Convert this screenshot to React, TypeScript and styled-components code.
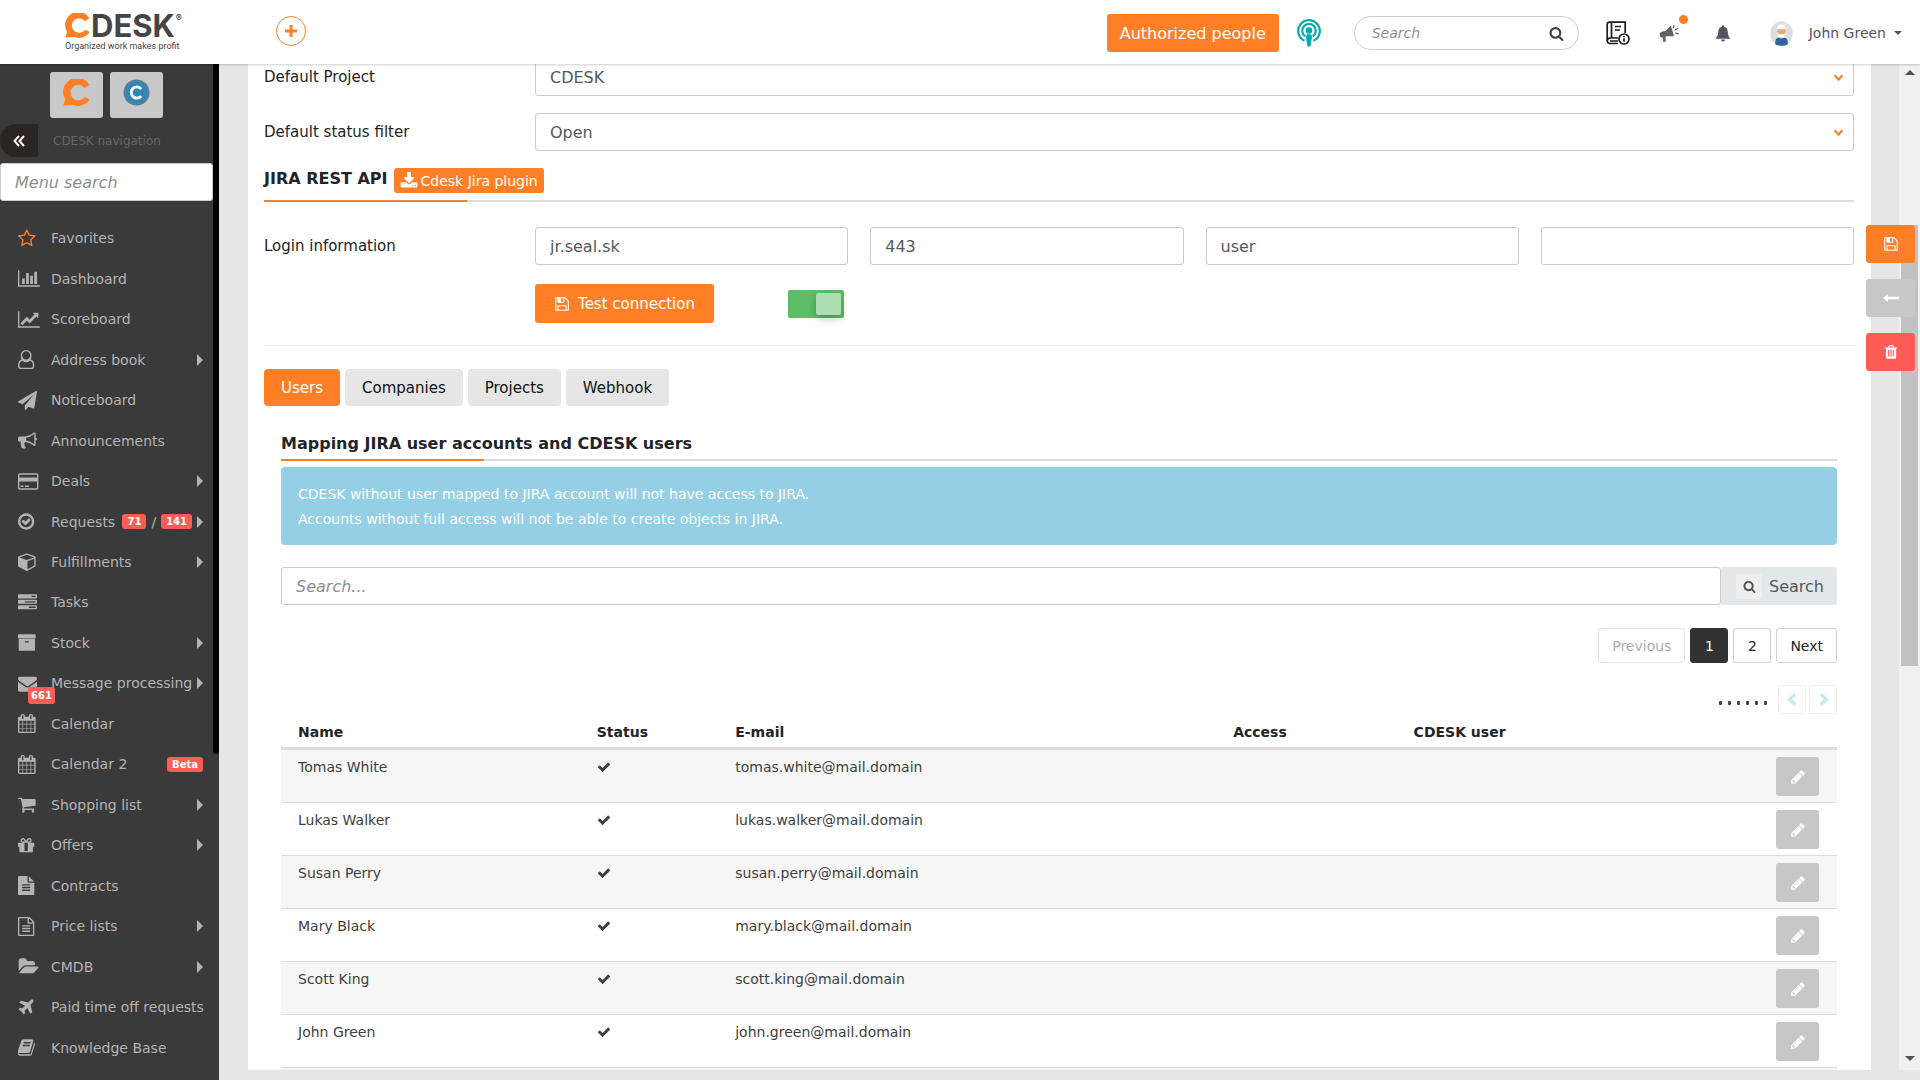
import React, { useLayoutEffect, useRef } from "react";
import styled, { createGlobalStyle, css } from "styled-components";

const c = {
  orange: "#ff7f27",
  red: "#ff5c58",
  side: "#3a3a3a",
  page: "#e6e6e6",
  line: "#dddddd",
  field: "#c9ccd0",
  text: "#212529",
  soft: "#404040",
  muted: "#c7c7c7",
};

const GlobalStyle = createGlobalStyle`
  *, *::before, *::after { box-sizing: border-box; }
  body { margin: 0; background: ${c.page}; }
  body, button, input, select {
    font-family: Verdana, "DejaVu Sans", sans-serif;
  }
  button { border: 0; cursor: pointer; }
  h2, ul, p { margin: 0; padding: 0; }
  ul { list-style: none; }
`;

/* ---------- icons ---------- */

const glyphs = {
  star: [64, "M1201 1004l306-297-422-62-189-382-189 382-422 62 306 297-73 421 378-199 377 199zm527-357q0 22-26 48l-363 354 86 500q1 7 1 20 0 50-41 50-19 0-40-12l-449-236-449 236q-22 12-40 12-21 0-31.5-14.5t-10.5-35.5q0-6 2-20l86-500-364-354q-25-27-25-48 0-37 56-46l502-73 225-455q19-41 49-41t49 41l225 455 502 73q56 9 56 46z"],
  bars: [0, "M640 896v512h-256v-512h256zm384-512v1024h-256v-1024h256zm1024 1152v128h-2048v-1536h128v1408h1920zm-640-896v768h-256v-768h256zm384-384v1152h-256v-1152h256z"],
  line: [0, "M2048 1536v128h-2048v-1536h128v1408h1920zm-128-1248v435q0 21-19.5 29.5t-35.5-7.5l-121-121-633 633q-10 10-23 10t-23-10l-233-233-416 416-192-192 585-585q10-10 23-10t23 10l233 233 464-464-121-121q-16-16-7.5-35.5t29.5-19.5h435q14 0 23 9t9 23z"],
  user: [0, "M1201 896q335 110 335 556 0 340-282 340h-972q-282 0-282-340 0-446 335-556-79-125-79-384 0-212 150-362t362-150 362 150 150 362q0 259-79 384zm-433-768q-159 0-271.500 112.500t-112.500 271.500 112.500 271.500 271.500 112.500 271.500-112.500 112.500-271.500-112.500-271.500-271.500-112.500zm486 1536q154 0 154-212 0-380-296-444-152 144-344 144t-344-144q-296 64-296 444 0 212 154 212z"],
  plane2: [0, "M1764 11q33 24 27 64l-256 1536q-5 29-32 45-14 8-31 8-11 0-24-5l-453-185-242 295q-18 23-49 23-13 0-22-4-19-7-30.5-23.5t-11.5-36.5v-349l864-1059-1069 925-395-162q-37-14-40-55-2-40 32-59l1664-960q15-9 32-9 20 0 36 11z"],
  horn: [0, "M1664 640q53 0 90.5 37.5t37.5 90.5-37.5 90.5-90.5 37.5v384q0 52-38 90t-90 38q-417-347-812-380-58 19-91 66t-31 100.5 40 92.5q-20 33-23 65.5t6 58 33.5 55 48 50 61.5 50.5q-29 58-111.5 83t-168.5 11.5-132-55.5q-7-23-29.5-87.5t-32-94.5-23-89-15-101 3.5-98.5 22-110.5h-122q-66 0-113-47t-47-113v-192q0-66 47-113t113-47h480q435 0 896-384 52 0 90 38t38 90v384zm-128 604v-954q-394 302-768 343v270q377 42 768 341z"],
  card: [0, "M1760 128q66 0 113 47t47 113v1216q0 66-47 113t-113 47h-1600q-66 0-113-47t-47-113v-1216q0-66 47-113t113-47h1600zm-1600 128q-13 0-22.5 9.5t-9.5 22.5v224h1664v-224q0-13-9.5-22.5t-22.5-9.5h-1600zm1600 1280q13 0 22.5-9.5t9.5-22.5v-608h-1664v608q0 13 9.5 22.5t22.5 9.5h1600zm-1504-128v-128h256v128h-256zm384 0v-128h384v128h-384z"],
  done: [128, "M1299 813l-422 422q-19 19-45 19t-45-19l-294-294q-19-19-19-45t19-45l102-102q19-19 45-19t45 19l147 147 275-275q19-19 45-19t45 19l102 102q19 19 19 45t-19 45zm141 83q0-148-73-273t-198-198-273-73-273 73-198 198-73 273 73 273 198 198 273 73 273-73 198-198 73-273zm224 0q0 209-103 385.5t-279.5 279.5-385.5 103-385.5-103-279.5-279.5-103-385.5 103-385.5 279.5-279.5 385.5-103 385.5 103 279.5 279.5 103 385.5z"],
  cube: [0, "M896 1629l640-349v-636l-640 233v752zm-64-865l698-254-698-254-698 254zm832-252v768q0 35-18 65t-49 47l-704 384q-28 16-61 16t-61-16l-704-384q-31-17-49-47t-18-65v-768q0-40 23-73t61-47l704-256q22-8 44-8t44 8l704 256q38 14 61 47t23 73z"],
  tasks: [0, "M1024 1408h640v-128h-640v128zm-384-512h1024v-128h-1024v128zm640-512h384v-128h-384v128zm512 832v256q0 26-19 45t-45 19h-1664q-26 0-45-19t-19-45v-256q0-26 19-45t45-19h1664q26 0 45 19t19 45zm0-512v256q0 26-19 45t-45 19h-1664q-26 0-45-19t-19-45v-256q0-26 19-45t45-19h1664q26 0 45 19t19 45zm0-512v256q0 26-19 45t-45 19h-1664q-26 0-45-19t-19-45v-256q0-26 19-45t45-19h1664q26 0 45 19t19 45z"],
  box: [64, "M1088 832q0-26-19-45t-45-19h-256q-26 0-45 19t-19 45 19 45 45 19h256q26 0 45-19t19-45zm576-192v960q0 26-19 45t-45 19h-1408q-26 0-45-19t-19-45v-960q0-26 19-45t45-19h1408q26 0 45 19t19 45zm64-448v256q0 26-19 45t-45 19h-1536q-26 0-45-19t-19-45v-256q0-26 19-45t45-19h1536q26 0 45 19t19 45z"],
  mail: [0, "M1792 710v794q0 66-47 113t-113 47h-1472q-66 0-113-47t-47-113v-794q44 49 101 87 362 246 497 345 57 42 92.5 65.5t94.5 48 110 24.5h2q51 0 110-24.5t94.5-48 92.5-65.5q170-123 498-345 57-39 100-87zm0-294q0 79-49 151t-122 123q-376 261-468 325-10 7-42.5 31t-54 38.5-52 32.5-57.5 27-50 9h-2q-23 0-50-9t-57.5-27-52-32.5-54-38.5-42.5-31q-91-64-262-182.5t-205-142.5q-62-42-117-115.5t-55-136.5q0-78 41.5-130t118.5-52h1472q65 0 112.5 47t47.5 113z"],
  calendar: [64, "M192 1664h288v-288h-288v288zm352 0h320v-288h-320v288zm-352-352h288v-320h-288v320zm352 0h320v-320h-320v320zm-352-384h288v-288h-288v288zm736 736h320v-288h-320v288zm-384-736h320v-288h-320v288zm768 736h288v-288h-288v288zm-384-352h320v-320h-320v320zm-352-864v-288q0-13-9.5-22.5t-22.5-9.5h-64q-13 0-22.5 9.5t-9.5 22.5v288q0 13 9.5 22.5t22.5 9.5h64q13 0 22.5-9.5t9.5-22.5zm736 864h288v-320h-288v320zm-384-384h320v-288h-320v288zm384 0h288v-288h-288v288zm32-480v-288q0-13-9.5-22.5t-22.5-9.5h-64q-13 0-22.5 9.5t-9.5 22.5v288q0 13 9.5 22.5t22.5 9.5h64q13 0 22.5-9.5t9.5-22.5zm384-64v1280q0 52-38 90t-90 38h-1408q-52 0-90-38t-38-90v-1280q0-52 38-90t90-38h128v-96q0-66 47-113t113-47h64q66 0 113 47t47 113v96h384v-96q0-66 47-113t113-47h64q66 0 113 47t47 113v96h128q52 0 90 38t38 90z"],
  cart: [64, "M704 1536q0 52-38 90t-90 38-90-38-38-90 38-90 90-38 90 38 38 90zm896 0q0 52-38 90t-90 38-90-38-38-90 38-90 90-38 90 38 38 90zm128-1088v512q0 24-16.5 42.5t-40.5 21.5l-1044 122q13 60 13 70 0 16-24 64h920q26 0 45 19t19 45-19 45-45 19h-1024q-26 0-45-19t-19-45q0-11 8-31.5t16-36 21.5-40 15.5-29.5l-177-823h-204q-26 0-45-19t-19-45 19-45 45-19h256q16 0 28.5 6.5t19.5 15.5 13 24.5 8 26 5.5 29.5 4.5 26h1201q26 0 45 19t19 45z"],
  gift: [128, "M1056 1356v-716h-320v716q0 25 18 38.5t46 13.5h192q28 0 46-13.5t18-38.5zm-456-844h195l-126-161q-26-31-69-31-40 0-68 28t-28 68 28 68 68 28zm688-96q0-40-28-68t-68-28q-43 0-69 31l-125 161h194q40 0 68-28t28-68zm376 256v320q0 14-9 23t-23 9h-96v416q0 40-28 68t-68 28h-1088q-40 0-68-28t-28-68v-416h-96q-14 0-23-9t-9-23v-320q0-14 9-23t23-9h440q-93 0-158.5-65.5t-65.5-158.5 65.5-158.5 158.5-65.5q107 0 168 77l128 165 128-165q61-77 168-77 93 0 158.5 65.5t65.5 158.5-65.5 158.5-158.5 65.5h440q14 0 23 9t9 23z"],
  file: [128, "M1596 476q14 14 28 36h-472v-472q22 14 36 28zm-476 164h544v1056q0 40-28 68t-68 28h-1344q-40 0-68-28t-28-68v-1600q0-40 28-68t68-28h800v544q0 40 28 68t68 28zm160 736v-64q0-14-9-23t-23-9h-704q-14 0-23 9t-9 23v64q0 14 9 23t23 9h704q14 0 23-9t9-23zm0-256v-64q0-14-9-23t-23-9h-704q-14 0-23 9t-9 23v64q0 14 9 23t23 9h704q14 0 23-9t9-23zm0-256v-64q0-14-9-23t-23-9h-704q-14 0-23 9t-9 23v64q0 14 9 23t23 9h704q14 0 23-9t9-23z"],
  fileLine: [128, "M1596 380q28 28 48 76t20 88v1152q0 40-28 68t-68 28h-1344q-40 0-68-28t-28-68v-1600q0-40 28-68t68-28h896q40 0 88 20t76 48zm-444-244v376h376q-10-29-22-41l-313-313q-12-12-41-22zm384 1528v-1024h-416q-40 0-68-28t-28-68v-416h-768v1536h1280zm-1024-864q0-14 9-23t23-9h704q14 0 23 9t9 23v64q0 14-9 23t-23 9h-704q-14 0-23-9t-9-23v-64zm736 224q14 0 23 9t9 23v64q0 14-9 23t-23 9h-704q-14 0-23-9t-9-23v-64q0-14 9-23t23-9h704zm0 256q14 0 23 9t9 23v64q0 14-9 23t-23 9h-704q-14 0-23-9t-9-23v-64q0-14 9-23t23-9h704z"],
  folder: [0, "M1943 952q0 31-31 66l-336 396q-43 51-120.5 86.5t-143.5 35.5h-1088q-34 0-60.5-13t-26.5-43q0-31 31-66l336-396q43-51 120.5-86.5t143.5-35.5h1088q34 0 60.5 13t26.5 43zm-343-344v160h-832q-94 0-197 47.5t-164 119.5l-337 396-5 6q0-4-.5-12.5t-.5-12.5v-960q0-92 66-158t158-66h320q92 0 158 66t66 158v32h544q92 0 158 66t66 158z"],
  plane: [128, "M1568 160q44 52 12 148t-108 172l-161 161 160 696q5 19-12 33l-128 96q-7 6-19 6-4 0-7-1-15-3-21-16l-279-508-259 259 53 194q5 17-8 31l-96 96q-9 9-23 9h-2q-15-2-24-13l-189-252-252-189q-11-7-13-23-1-13 9-25l96-97q9-9 23-9 6 0 8 1l194 53 259-259-508-279q-14-8-17-24-2-16 9-27l128-128q14-13 30-8l665 159 160-160q76-76 172-108t148 12z"],
  book: [64, "M1639 478q40 57 18 129l-275 906q-19 64-76.5 107.5t-122.5 43.5h-923q-77 0-148.5-53.5t-99.5-131.5q-24-67-2-127 0-4 3-27t4-37q1-8-3-21.5t-3-19.5q2-11 8-21t16.5-23.5 16.5-23.5q23-38 45-91.5t30-91.5q3-10 .5-30t-.5-28q3-11 17-28t17-23q21-36 42-92t25-90q1-9-2.5-32t.5-28q4-13 22-30.5t22-22.5q19-26 42.5-84.5t27.5-96.5q1-8-3-25.5t-2-26.5q2-8 9-18t18-23 17-21q8-12 16.5-30.5t15-35 16-36 19.5-32 26.5-23.5 36-11.5 47.5 5.5l-1 3q38-9 51-9h761q74 0 114 56t18 130l-274 906q-36 119-71.5 153.5t-128.5 34.5h-869q-27 0-38 15-11 16-1 43 24 70 144 70h923q29 0 56-15.5t35-41.5l300-987q7-22 5-57 38 15 59 43zm-1064 2q-4 13 2 22.5t20 9.5h608q13 0 25.5-9.5t16.5-22.5l21-64q4-13-2-22.5t-20-9.5h-608q-13 0-25.5 9.5t-16.5 22.5zm-83 256q-4 13 2 22.5t20 9.5h608q13 0 25.5-9.5t16.5-22.5l21-64q4-13-2-22.5t-20-9.5h-608q-13 0-25.5 9.5t-16.5 22.5z"],
  pencil: [0, "M491 1536l91-91-235-235-91 91v107h128v128h107zm523-928q0-22-22-22-10 0-17 7l-542 542q-7 7-7 17 0 22 22 22 10 0 17-7l542-542q7-7 7-17zm-54-192l416 416-832 832h-416v-416zm683 96q0 53-37 90l-166 166-416-416 166-165q36-38 90-38 53 0 91 38l235 234q37 39 37 91z"],
  trash: [0, "M704 1376v-704q0-14-9-23t-23-9h-64q-14 0-23 9t-9 23v704q0 14 9 23t23 9h64q14 0 23-9t9-23zm256 0v-704q0-14-9-23t-23-9h-64q-14 0-23 9t-9 23v704q0 14 9 23t23 9h64q14 0 23-9t9-23zm256 0v-704q0-14-9-23t-23-9h-64q-14 0-23 9t-9 23v704q0 14 9 23t23 9h64q14 0 23-9t9-23zm-544-992h448l-48-117q-7-9-17-11h-317q-10 2-17 11zm928 32v64q0 14-9 23t-23 9h-96v948q0 83-47 143.5t-113 60.5h-832q-66 0-113-58.5t-47-141.5v-952h-96q-14 0-23-9t-9-23v-64q0-14 9-23t23-9h309l70-167q15-37 54-63t79-26h320q40 0 79 26t54 63l70 167h309q14 0 23 9t9 23z"],
  save: [0, "M512 1536h768v-384h-768v384zm896 0h128v-896q0-14-10-38.5t-20-34.5l-281-281q-10-10-34-20t-39-10v416q0 40-28 68t-68 28h-576q-40 0-68-28t-28-68v-416h-128v1280h128v-416q0-40 28-68t68-28h832q40 0 68 28t28 68v416zm-384-928v-320q0-13-9.5-22.5t-22.5-9.5h-192q-13 0-22.5 9.5t-9.5 22.5v320q0 13 9.5 22.5t22.5 9.5h192q13 0 22.5-9.5t9.5-22.5zm640 32v928q0 40-28 68t-68 28h-1344q-40 0-68-28t-28-68v-1344q0-40 28-68t68-28h928q40 0 88 20t76 48l280 280q28 28 48 76t20 88z"],
  check: [0, "M1671 566q0 40-28 68l-724 724-136 136q-28 28-68 28t-68-28l-136-136-362-362q-28-28-28-68t28-68l136-136q28-28 68-28t68 28l294 295 656-657q28-28 68-28t68 28l136 136q28 28 28 68z"],
  search: [0, "M1216 832q0-185-131.5-316.5t-316.5-131.5-316.5 131.500-131.500 316.500 131.500 316.500 316.500 131.500 316.500-131.500 131.500-316.500zm512 832q0 52-38 90t-90 38q-54 0-90-38l-343-342q-179 124-399 124-143 0-273.500-55.500t-225-150-150-225-55.500-273.500 55.500-273.500 150-225 225-150 273.500-55.500 273.500 55.500 225 150 150 225 55.500 273.500q0 220-124 399l343 343q37 37 37 90z"],
  download: [0, "M1344 1344q0-26-19-45t-45-19-45 19-19 45 19 45 45 19 45-19 19-45zm256 0q0-26-19-45t-45-19-45 19-19 45 19 45 45 19 45-19 19-45zm128-224v320q0 40-28 68t-68 28h-1472q-40 0-68-28t-28-68v-320q0-40 28-68t68-28h465l135 136q58 56 136 56t136-56l136-136h464q40 0 68 28t28 68zm-325-569q17 41-14 70l-448 448q-18 19-45 19t-45-19l-448-448q-31-29-14-70 17-39 59-39h256v-448q0-26 19-45t45-19h256q26 0 45 19t19 45v448h256q42 0 59 39z"],
} as const;

type GlyphName = keyof typeof glyphs;

const Svg = styled.svg`
  display: block;
  flex: none;
`;

/** Solid 1792-unit glyph; nav glyphs get a 2048-unit box so that they line up on the left. */
function Glyph({ name, size, wide }: { name: GlyphName; size: number; wide?: boolean }) {
  const [x, d] = glyphs[name];
  return (
    <Svg
      width={wide ? size + 3 : size}
      height={size}
      viewBox={wide ? `${x} 0 2048 1792` : "0 0 1792 1792"}
      preserveAspectRatio="xMinYMid meet"
      fill="currentColor"
      aria-hidden
    >
      <path d={d} />
    </Svg>
  );
}

function LogoMark({ size }: { size: number }) {
  return (
    <Svg width={size} height={size} viewBox="0 0 26 26" aria-hidden>
      <path
        d="M25.500 5.500L20.700 8.600A7.500 7.500 0 1 0 20.900 17.300L25.700 19.800A13 13 0 0 1 9.800 25L.4 25.600L2 19.400A13 13 0 1 1 25.500 5.500Z"
        fill={c.orange}
      />
    </Svg>
  );
}

function RoundMark() {
  return (
    <Svg width="27" height="27" viewBox="0 0 27 27" aria-hidden>
      <circle cx="13.500" cy="13.500" r="13" fill="#547d9c" />
      <circle cx="13.500" cy="13.500" r="10.500" fill="#2f86ae" />
      <path d="M18.200 10A5.600 5.600 0 1 0 18.200 17" fill="none" stroke="#fff" strokeWidth="2.800" />
    </Svg>
  );
}

function PodcastIcon() {
  return (
    <Svg width="24" height="28" viewBox="0 0 24 28" fill="none" stroke="#00aab0" strokeWidth="2.200" aria-hidden>
      <path d="M7.500 21.700A10.800 10.800 0 1 1 16.500 21.700" />
      <path d="M8.300 17.400A6.800 6.800 0 1 1 15.700 17.400" />
      <circle cx="12" cy="11.500" r="3.300" fill="#00aab0" stroke="none" />
      <path d="M9 18a3 3 0 0 1 6 0l-1.200 8a1.800 1.800 0 0 1-3.600 0z" fill="#00aab0" stroke="none" />
    </Svg>
  );
}

function ManualIcon() {
  return (
    <Svg width="24" height="24" viewBox="0 0 24 24" fill="none" stroke="#1c1c1c" strokeWidth="1.700" aria-hidden>
      <path d="M12 22.500H4A2.800 2.800 0 0 1 1.200 19.700V3.500A2.300 2.300 0 0 1 3.500 1.200H19.200V12" />
      <path d="M5.500 1.200V17M12 17H4a2.700 2.700 0 0 0-2.700 2.500M4 20H12M9 5.500h6M9 9h5" />
      <circle cx="18" cy="18" r="5" fill="#fff" />
      <path d="M18 17.200v3.600M18 14.900v1.300" />
    </Svg>
  );
}

function MegaphoneIcon() {
  return (
    <Svg width="21" height="19" viewBox="0 0 21 19" fill="#626262" aria-hidden>
      <path d="M.6 9.200L3.200 7.600L6.500 7L11 2.200L12 2L15 11.800L14.200 12.200L7.600 12.300L6.500 12.800L6.800 17.800H4.300L3.500 13.300L1.500 13.500Z" />
      <path d="M14 4.200L15.200 1.200M15.600 6.300L18.800 4.200M16.200 9L19.600 9.800" stroke="#626262" strokeWidth="1.300" />
    </Svg>
  );
}

function BellIcon() {
  return (
    <Svg width="16" height="17" viewBox="0 0 16 17" fill="#55535f" aria-hidden>
      <path d="M8 .2a1.300 1.300 0 0 1 1.300 1.500C11.700 2.300 12.600 4.400 12.700 6.500C12.900 10.500 14 12 15.600 13.800H.4C2 12 3.100 10.500 3.300 6.500C3.400 4.400 4.300 2.300 6.700 1.700A1.300 1.300 0 0 1 8 .2ZM6 14.500h4a2 2 0 0 1-4 0z" />
    </Svg>
  );
}

function AvatarIcon() {
  return (
    <Svg width="23" height="25" viewBox="0 0 23 25" aria-hidden>
      <ellipse cx="11.500" cy="12.500" rx="11.200" ry="12.200" fill="#dcdee0" />
      <path d="M7.500 8.500V6.500a4 3 0 0 1 8 0V12a4 4.500 0 0 1-8 0z" fill="#fff" />
      <path d="M7.300 8.200h8.400v2.800a4.200 3 0 0 1-2.600 2.300h-3.200a4.200 3 0 0 1-2.600-2.300z" fill="#e3ac70" />
      <path d="M5.300 23.500v-2.800a4 4 0 0 1 3.700-3.900q2.500 1.500 5 0A4 4 0 0 1 17.700 20.700v2.800q-6 2.600-12.400 0z" fill="#2d6499" />
    </Svg>
  );
}

function Chevron({ dir, size, width }: { dir: "down" | "left" | "right"; size: number; width: number }) {
  const d = { down: "M1.500 3L5 7L8.500 3", left: "M7 1L3 5L7 9", right: "M3 1L7 5L3 9" }[dir];
  return (
    <Svg width={size} height={size} viewBox="0 0 10 10" fill="none" stroke="currentColor" strokeWidth={width} aria-hidden>
      <path d={d} />
    </Svg>
  );
}

const Caret = styled.span<{ $dir: "right" | "down" | "up"; $size: number }>`
  flex: none;
  border: ${(p) => p.$size}px solid transparent;
  ${(p) =>
    p.$dir === "right"
      ? css`
          border-left-color: currentColor;
          border-right: 0;
        `
      : p.$dir === "down"
        ? css`
            border-top-color: currentColor;
            border-bottom: 0;
          `
        : css`
            border-bottom-color: currentColor;
            border-top: 0;
          `}
`;

/* ---------- shell ---------- */

const Shell = styled.div`
  height: 100vh;
  display: grid;
  grid-template: 64px minmax(0, 1fr) / 219px minmax(0, 1fr);
  color: ${c.text};
  overflow: hidden;
`;

const Header = styled.header`
  grid-column: 1 / -1;
  z-index: 2;
  display: flex;
  align-items: center;
  padding: 0 18px 10px 65px;
  background: #fff;
  box-shadow: 0 1px 2px rgba(0, 0, 0, 0.2);
`;

const Logo = styled.a`
  display: grid;
  grid-template-columns: auto auto 1fr;
  column-gap: 1px;
  width: 120px;
  padding-top: 11px;
  color: #454545;
  text-decoration: none;
`;

const LogoWord = styled.span`
  font: 700 31px/26px Inter, sans-serif;
`;

const LogoSign = styled.sup`
  font: 700 9px/10px Inter, sans-serif;
`;

const LogoTag = styled.span`
  grid-column: 1 / -1;
  font: 9px/14px Roboto, sans-serif;
  white-space: nowrap;
`;

const AddButton = styled.button`
  display: grid;
  place-items: center;
  width: 30px;
  height: 30px;
  margin: 8px auto 0 91px;
  padding: 0;
  border: 1px solid ${c.orange};
  border-radius: 50%;
  background: #fff;
  color: ${c.orange};
`;

const HeaderTools = styled.div`
  display: flex;
  align-items: center;
  padding-top: 12px;
`;

const AuthButton = styled.button`
  height: 38px;
  width: 172px;
  margin-right: 18px;
  padding: 0;
  border-radius: 3px;
  background: ${c.orange};
  color: #fff;
  font-size: 16px;
  white-space: nowrap;
`;

const HeaderSearch = styled.label`
  display: flex;
  align-items: center;
  width: 225px;
  height: 34px;
  margin: 0 27px 0 33px;
  padding: 0 14px 0 17px;
  border: 1px solid ${c.field};
  border-radius: 17px;
  color: #444;
`;

const placeholder = css`
  &::placeholder {
    color: #8e8e8e;
    font-style: italic;
    opacity: 1;
  }
`;

const HeaderSearchInput = styled.input`
  flex: 1;
  min-width: 0;
  padding: 0;
  border: 0;
  outline: 0;
  background: none;
  font-size: 14px;
  ${placeholder}
`;

const IconButton = styled.button<{ $gap?: number }>`
  position: relative;
  display: flex;
  margin-left: ${(p) => p.$gap ?? 0}px;
  padding: 0;
  background: none;
`;

const Dot = styled.span`
  position: absolute;
  top: -9px;
  right: -8px;
  width: 9px;
  height: 9px;
  border-radius: 50%;
  background: ${c.orange};
`;

const UserButton = styled.button`
  display: flex;
  align-items: center;
  gap: 8px;
  margin-left: 39px;
  padding: 0;
  background: none;
  color: #55535f;
  font-size: 14px;
  white-space: nowrap;
`;

const UserName = styled.span`
  margin-left: 8px;
`;

/* ---------- sidebar ---------- */

const Sidebar = styled.aside`
  display: grid;
  grid-template-columns: minmax(0, 1fr) 6px;
  background: ${c.side};
`;

const SideScroll = styled.div`
  height: 690px;
  border-radius: 0 0 3px 3px;
  background: #000;
`;

const SideBody = styled.div`
  display: flex;
  flex-direction: column;
  min-height: 0;
  padding-top: 8px;
`;

const Tiles = styled.div`
  display: flex;
  gap: 7px;
  padding-left: 50px;
`;

const Tile = styled.button`
  display: flex;
  justify-content: center;
  width: 53px;
  height: 46px;
  padding: 7px 0 0;
  border-radius: 3px;
  background: #c8c8c8;
`;

const Fold = styled.div`
  display: flex;
  align-items: center;
  gap: 15px;
  height: 33px;
  margin: 6px 0;
  color: #6c6661;
  font-size: 12px;
`;

const FoldButton = styled.button`
  display: grid;
  place-items: center;
  width: 38px;
  height: 33px;
  padding: 0;
  border-radius: 16px 0 0 16px;
  background: #2a2522;
  color: #fff;
`;

const field = css`
  width: 100%;
  height: 38px;
  padding: 0 14px;
  border: 1px solid ${c.field};
  border-radius: 3px;
  background: #fff;
  color: #55585c;
  font-size: 16px;
  ${placeholder}
`;

const MenuSearch = styled.input`
  flex: none;
  ${field}
`;

const NavList = styled.ul`
  flex: 1;
  display: flex;
  flex-direction: column;
  padding: 17px 0 12px;
`;

const NavItem = styled.li`
  flex: 1;
  display: flex;
`;

const NavLink = styled.a`
  position: relative;
  flex: 1;
  display: flex;
  align-items: center;
  padding: 0 10px 0 18px;
  color: #b4b4b4;
  font-size: 14px;
  text-decoration: none;
  white-space: nowrap;
`;

const NavIcon = styled.span<{ $hot?: boolean }>`
  width: 33px;
  color: ${(p) => (p.$hot ? c.orange : "inherit")};
`;

const NavEnd = styled.span`
  display: flex;
  align-items: center;
  gap: 5px;
  margin-left: auto;
`;

const Badge = styled.span`
  padding: 0 5px;
  border-radius: 3px;
  background: ${c.red};
  color: #fff;
  font: bold 10px/15px Verdana, "DejaVu Sans", sans-serif;
`;

const PinnedBadge = styled(Badge)`
  position: absolute;
  left: 28px;
  top: 24px;
  padding: 1px 3px;
`;

/* ---------- main ---------- */

const Main = styled.main`
  display: grid;
  grid-template-columns: minmax(0, 1fr) 21px;
  min-height: 0;
  padding-bottom: 10px;
`;

const Scroller = styled.div`
  overflow: hidden;
  padding: 0 28px 0 29px;
`;

const Panel = styled.div`
  padding: 14px 17px 0 16px;
  background: #fff;
`;

const Track = styled.div`
  display: flex;
  flex-direction: column;
  align-items: center;
  justify-content: space-between;
  padding: 6px 2px 9px;
  background: #f0f0f0;
  color: #505050;
`;

const Thumb = styled.div`
  width: 17px;
  height: 441px;
  margin: 150px 0 auto;
  background: #c1c1c1;
`;

const FormRow = styled.div<{ $top?: number }>`
  display: grid;
  grid-template-columns: 271px minmax(0, 1fr);
  align-items: center;
  margin-top: ${(p) => p.$top ?? 0}px;
  font-size: 15px;
`;

const SelectBox = styled.div`
  position: relative;
  color: ${c.orange};
  svg {
    position: absolute;
    right: 10px;
    top: 14px;
    pointer-events: none;
  }
`;

const Select = styled.select`
  ${field}
  appearance: none;
`;

const Input = styled.input`
  ${field}
`;

const Fields = styled.div`
  display: grid;
  grid-template-columns: repeat(4, minmax(0, 1fr));
  gap: 22px;
`;

const Heading = styled.div<{ $top: number; $pad: number }>`
  display: flex;
  align-items: flex-start;
  gap: 6px;
  margin-top: ${(p) => p.$top}px;
  padding-bottom: ${(p) => p.$pad}px;
  border-bottom: 2px solid transparent;
  background:
    linear-gradient(${c.orange}, ${c.orange}) 0 100% / 203px 2px no-repeat border-box,
    linear-gradient(${c.line}, ${c.line}) 0 100% / 100% 2px no-repeat border-box;
`;

const Title = styled.h2`
  font-size: 16px;
  line-height: 22px;
`;

const PluginButton = styled.button`
  display: flex;
  align-items: center;
  gap: 3px;
  height: 25px;
  padding: 0 6px;
  border-radius: 3px;
  background: ${c.orange};
  color: #fff;
  font-size: 14px;
`;

const Actions = styled.div`
  display: flex;
  align-items: center;
  gap: 74px;
  margin-top: 19px;
  padding: 0 0 22px 271px;
  border-bottom: 1px solid #ececec;
`;

const TestButton = styled.button`
  display: flex;
  align-items: center;
  justify-content: center;
  gap: 8px;
  width: 179px;
  height: 39px;
  padding: 0;
  border-radius: 3px;
  background: ${c.orange};
  color: #fff;
  font-size: 15px;
`;

const Toggle = styled.input`
  appearance: none;
  display: flex;
  justify-content: flex-end;
  width: 56px;
  height: 28px;
  margin: 0;
  padding: 3px;
  border-radius: 2px;
  background: #5fbd67;
  &::before {
    content: "";
    width: 25px;
    border-radius: 2px;
    background: #aedfb3;
    box-shadow: 0 3px 8px rgba(0, 0, 0, 0.25);
  }
`;

const Tabs = styled.div`
  display: flex;
  gap: 5px;
  margin-top: 23px;
`;

const Tab = styled.button<{ $on?: boolean }>`
  height: 37px;
  padding: 0 17px;
  border-radius: 4px;
  background: ${(p) => (p.$on ? c.orange : c.page)};
  color: ${(p) => (p.$on ? "#fff" : "#111")};
  font-size: 15px;
`;

const Section = styled.section`
  padding: 0 17px;
`;

const Notice = styled.div`
  margin-top: 6px;
  padding: 15px 17px 13px;
  border-radius: 4px;
  background: #94cfe5;
  color: #fff;
  font-size: 14px;
  line-height: 25px;
`;

const SearchRow = styled.form`
  display: grid;
  grid-template-columns: minmax(0, 1fr) 116px;
  margin-top: 22px;
`;

const SearchButton = styled.button`
  display: flex;
  align-items: center;
  gap: 7px;
  padding: 0 0 0 15px;
  border-radius: 0 3px 3px 0;
  background: #e2e7ea;
  color: #55585c;
  font-size: 16px;
`;

const SearchChip = styled.span`
  display: grid;
  place-items: center;
  width: 26px;
  height: 25px;
  border-radius: 3px;
  background: #eeeeee;
  color: #505050;
`;

const Pager = styled.nav`
  display: flex;
  justify-content: flex-end;
  gap: 5px;
  margin-top: 23px;
`;

const PageButton = styled.button<{ $on?: boolean }>`
  min-width: 38px;
  height: 35px;
  padding: 0 13px;
  border: 1px solid ${(p) => (p.$on ? "#323232" : "#d0d0d0")};
  border-radius: 3px;
  background: ${(p) => (p.$on ? "#323232" : "#fff")};
  color: ${(p) => (p.$on ? "#fff" : c.text)};
  font-size: 14px;
  &:disabled {
    border-color: #e3e3e3;
    color: #adadad;
  }
`;

const ColumnPager = styled.div`
  display: flex;
  justify-content: flex-end;
  gap: 3px;
  margin-top: 22px;
`;

const Dots = styled.span`
  display: flex;
  align-items: center;
  gap: 6px;
  margin-right: 8px;
  padding-top: 7px;
`;

const DotMark = styled.i`
  width: 3px;
  height: 4px;
  border-radius: 1px;
  background: #444;
`;

const StepButton = styled.button`
  display: grid;
  place-items: center;
  width: 28px;
  height: 29px;
  padding: 0;
  border: 1px solid #f0f0f0;
  border-radius: 2px;
  background: #fff;
  color: #c9e7f4;
`;

const Table = styled.table`
  width: 100%;
  table-layout: fixed;
  border-collapse: separate;
  border-spacing: 0;
  color: ${c.soft};
  font-size: 14px;
`;

const Col = styled.col<{ $w?: number }>`
  ${(p) => p.$w && `width: ${p.$w}%;`}
`;

const Th = styled.th`
  height: 36px;
  padding: 3px 0 0 17px;
  border-bottom: 3px solid ${c.line};
  color: ${c.text};
  text-align: left;
`;

const Tr = styled.tr`
  &:nth-child(odd) {
    background: #f6f6f6;
  }
`;

const Td = styled.td`
  height: 53px;
  padding: 7px 0 6px 17px;
  border-bottom: 1px solid ${c.line};
  line-height: 20px;
  vertical-align: top;
`;

const CheckBox = styled.span`
  display: flex;
  align-items: center;
  height: 20px;
`;

const EditButton = styled.button`
  display: grid;
  place-items: center;
  width: 43px;
  height: 39px;
  margin-left: auto;
  margin-right: 18px;
  padding: 0;
  border-radius: 3px;
  background: ${c.muted};
  color: #fff;
`;

const SideActions = styled.div`
  position: fixed;
  top: 225px;
  right: 5px;
  z-index: 3;
  display: grid;
  gap: 16px;
`;

const SideAction = styled.button<{ $bg: string }>`
  display: grid;
  place-items: center;
  width: 49px;
  height: 38px;
  padding: 0;
  border-radius: 3px;
  background: ${(p) => p.$bg};
  color: #fff;
`;

/* ---------- data ---------- */

type Item = { label: string; icon: GlyphName; more?: boolean; counts?: number[]; pin?: number; tag?: string };

const items: Item[] = [
  { label: "Favorites", icon: "star" },
  { label: "Dashboard", icon: "bars" },
  { label: "Scoreboard", icon: "line" },
  { label: "Address book", icon: "user", more: true },
  { label: "Noticeboard", icon: "plane2" },
  { label: "Announcements", icon: "horn" },
  { label: "Deals", icon: "card", more: true },
  { label: "Requests", icon: "done", more: true, counts: [71, 141] },
  { label: "Fulfillments", icon: "cube", more: true },
  { label: "Tasks", icon: "tasks" },
  { label: "Stock", icon: "box", more: true },
  { label: "Message processing", icon: "mail", more: true, pin: 661 },
  { label: "Calendar", icon: "calendar" },
  { label: "Calendar 2", icon: "calendar", tag: "Beta" },
  { label: "Shopping list", icon: "cart", more: true },
  { label: "Offers", icon: "gift", more: true },
  { label: "Contracts", icon: "file" },
  { label: "Price lists", icon: "fileLine", more: true },
  { label: "CMDB", icon: "folder", more: true },
  { label: "Paid time off requests", icon: "plane" },
  { label: "Knowledge Base", icon: "book" },
];

const people = [
  ["Tomas White", "tomas.white@mail.domain"],
  ["Lukas Walker", "lukas.walker@mail.domain"],
  ["Susan Perry", "susan.perry@mail.domain"],
  ["Mary Black", "mary.black@mail.domain"],
  ["Scott King", "scott.king@mail.domain"],
  ["John Green", "john.green@mail.domain"],
];

/* ---------- app ---------- */

export default function App() {
  const scroller = useRef<HTMLDivElement>(null);

  useLayoutEffect(() => {
    if (scroller.current) scroller.current.scrollTop = 20;
  }, []);

  return (
    <>
      <GlobalStyle />
      <Shell>
        <Header>
          <Logo href="#">
            <LogoMark size={25} />
            <LogoWord>DESK</LogoWord>
            <LogoSign>®</LogoSign>
            <LogoTag>Organized work makes profit</LogoTag>
          </Logo>
          <AddButton aria-label="Add">
            <Svg width="12" height="12" viewBox="0 0 12 12" aria-hidden>
              <path d="M6 0v12M0 6h12" stroke="currentColor" strokeWidth="3" />
            </Svg>
          </AddButton>
          <HeaderTools>
            <AuthButton>Authorized people</AuthButton>
            <IconButton aria-label="Remote support">
              <PodcastIcon />
            </IconButton>
            <HeaderSearch>
              <HeaderSearchInput placeholder="Search" aria-label="Search" />
              <Glyph name="search" size={15} />
            </HeaderSearch>
            <IconButton aria-label="Manual">
              <ManualIcon />
            </IconButton>
            <IconButton aria-label="News" $gap={29}>
              <MegaphoneIcon />
              <Dot />
            </IconButton>
            <IconButton aria-label="Notifications" $gap={35}>
              <BellIcon />
            </IconButton>
            <UserButton>
              <AvatarIcon />
              <UserName>John Green</UserName>
              <Caret $dir="down" $size={4} />
            </UserButton>
          </HeaderTools>
        </Header>

        <Sidebar>
          <SideBody>
            <Tiles>
              <Tile aria-label="CDESK">
                <LogoMark size={27} />
              </Tile>
              <Tile aria-label="Customer portal">
                <RoundMark />
              </Tile>
            </Tiles>
            <Fold>
              <FoldButton aria-label="Collapse menu">
                <Svg width="12" height="12" viewBox="0 0 12 12" fill="none" stroke="currentColor" strokeWidth="2" aria-hidden>
                  <path d="M6 1L1.500 6L6 11M11 1L6.500 6L11 11" />
                </Svg>
              </FoldButton>
              CDESK navigation
            </Fold>
            <MenuSearch placeholder="Menu search" aria-label="Menu search" />
            <NavList>
              {items.map((item) => (
                <NavItem key={item.label}>
                  <NavLink href="#">
                    <NavIcon $hot={item.icon === "star"}>
                      <Glyph name={item.icon} size={19} wide />
                    </NavIcon>
                    {item.label}
                    <NavEnd>
                      {item.counts && (
                        <>
                          <Badge>{item.counts[0]}</Badge>/<Badge>{item.counts[1]}</Badge>
                        </>
                      )}
                      {item.tag && <Badge>{item.tag}</Badge>}
                      {item.more && <Caret $dir="right" $size={6} />}
                    </NavEnd>
                    {item.pin && <PinnedBadge>{item.pin}</PinnedBadge>}
                  </NavLink>
                </NavItem>
              ))}
            </NavList>
          </SideBody>
          <SideScroll />
        </Sidebar>

        <Main>
          <Scroller ref={scroller}>
            <Panel>
              <FormRow>
                <label htmlFor="project">Default Project</label>
                <SelectBox>
                  <Select id="project">
                    <option>CDESK</option>
                  </Select>
                  <Chevron dir="down" size={11} width={2} />
                </SelectBox>
              </FormRow>
              <FormRow $top={17}>
                <label htmlFor="status">Default status filter</label>
                <SelectBox>
                  <Select id="status">
                    <option>Open</option>
                  </Select>
                  <Chevron dir="down" size={11} width={2} />
                </SelectBox>
              </FormRow>

              <Heading $top={17} $pad={7}>
                <Title>JIRA REST API</Title>
                <PluginButton>
                  <Glyph name="download" size={18} />
                  Cdesk Jira plugin
                </PluginButton>
              </Heading>
              <FormRow $top={25}>
                <label htmlFor="host">Login information</label>
                <Fields>
                  <Input id="host" defaultValue="jr.seal.sk" />
                  <Input aria-label="Port" defaultValue="443" />
                  <Input aria-label="User" defaultValue="user" />
                  <Input aria-label="Password" type="password" />
                </Fields>
              </FormRow>
              <Actions>
                <TestButton>
                  <Glyph name="save" size={16} />
                  Test connection
                </TestButton>
                <Toggle type="checkbox" defaultChecked aria-label="Connection enabled" />
              </Actions>

              <Tabs>
                <Tab $on>Users</Tab>
                <Tab>Companies</Tab>
                <Tab>Projects</Tab>
                <Tab>Webhook</Tab>
              </Tabs>

              <Section>
                <Heading $top={27} $pad={4}>
                  <Title>Mapping JIRA user accounts and CDESK users</Title>
                </Heading>
                <Notice>
                  <p>CDESK without user mapped to JIRA account will not have access to JIRA.</p>
                  <p>Accounts without full access will not be able to create objects in JIRA.</p>
                </Notice>
                <SearchRow>
                  <Input placeholder="Search..." aria-label="Search users" />
                  <SearchButton type="button">
                    <SearchChip>
                      <Glyph name="search" size={13} />
                    </SearchChip>
                    Search
                  </SearchButton>
                </SearchRow>
                <Pager>
                  <PageButton disabled>Previous</PageButton>
                  <PageButton $on>1</PageButton>
                  <PageButton>2</PageButton>
                  <PageButton>Next</PageButton>
                </Pager>
                <ColumnPager>
                  <Dots>
                    {[0, 1, 2, 3, 4, 5].map((n) => (
                      <DotMark key={n} />
                    ))}
                  </Dots>
                  <StepButton aria-label="Previous columns">
                    <Chevron dir="left" size={13} width={2.8} />
                  </StepButton>
                  <StepButton aria-label="Next columns">
                    <Chevron dir="right" size={13} width={2.8} />
                  </StepButton>
                </ColumnPager>
                <Table>
                  <colgroup>
                    <Col $w={19.2} />
                    <Col $w={8.9} />
                    <Col $w={32} />
                    <Col $w={11.6} />
                    <Col />
                    <Col $w={8} />
                  </colgroup>
                  <thead>
                    <tr>
                      <Th>Name</Th>
                      <Th>Status</Th>
                      <Th>E-mail</Th>
                      <Th>Access</Th>
                      <Th>CDESK user</Th>
                      <Th aria-label="Actions" />
                    </tr>
                  </thead>
                  <tbody>
                    {people.map(([name, mail]) => (
                      <Tr key={mail}>
                        <Td>{name}</Td>
                        <Td>
                          <CheckBox role="img" aria-label="Active">
                            <Glyph name="check" size={14} />
                          </CheckBox>
                        </Td>
                        <Td>{mail}</Td>
                        <Td />
                        <Td />
                        <Td>
                          <EditButton aria-label={`Edit ${name}`}>
                            <Glyph name="pencil" size={16} />
                          </EditButton>
                        </Td>
                      </Tr>
                    ))}
                    <Tr>
                      <Td colSpan={6} />
                    </Tr>
                  </tbody>
                </Table>
              </Section>
            </Panel>
          </Scroller>
          <Track>
            <Caret $dir="up" $size={5} />
            <Thumb />
            <Caret $dir="down" $size={5} />
          </Track>
        </Main>
      </Shell>

      <SideActions>
        <SideAction $bg={c.orange} aria-label="Save">
          <Glyph name="save" size={16} />
        </SideAction>
        <SideAction $bg={c.muted} aria-label="Back">
          <Svg width="16" height="8" viewBox="0 0 16 8" fill="currentColor" aria-hidden>
            <path d="M0 4L5 0V2.700H16V5.300H5V8Z" />
          </Svg>
        </SideAction>
        <SideAction $bg={c.red} aria-label="Delete">
          <Glyph name="trash" size={16} />
        </SideAction>
      </SideActions>
    </>
  );
}
